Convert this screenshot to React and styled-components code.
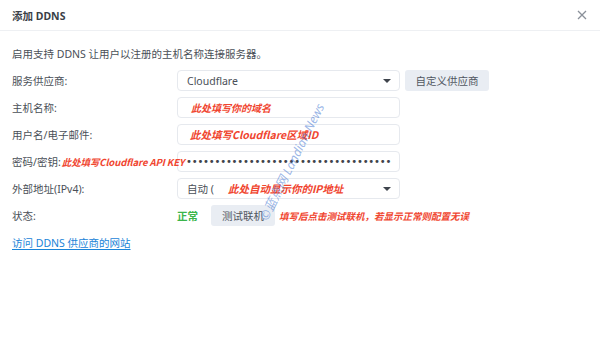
import React from 'react';
import styled, { createGlobalStyle } from 'styled-components';

const GlobalStyle = createGlobalStyle`
  html, body {
    margin: 0;
    padding: 0;
    background: #ffffff;
  }
  body {
    font-family: "Noto Sans", "Noto Sans CJK SC", sans-serif;
  }
`;

const Dialog = styled.div`
  position: relative;
  width: 600px;
  height: 338px;
  background: #ffffff;
  overflow: hidden;
`;

const Header = styled.div`
  display: flex;
  align-items: center;
  justify-content: space-between;
  height: 30px;
  padding: 0 12px;
  border-bottom: 1px solid #eef0f3;

  h1 {
    margin: 0;
    font-size: 10.5px;
    font-weight: 700;
    color: #3a3f47;
  }
`;

const Close = styled.button`
  display: flex;
  align-items: center;
  justify-content: center;
  width: 14px;
  height: 14px;
  padding: 0;
  border: none;
  background: none;
  margin-right: -1px;
`;

const Body = styled.div`
  padding: 16px 12px 0;
`;

const Desc = styled.p`
  margin: 0 0 9px;
  font-size: 10.5px;
  line-height: 14px;
  color: #4a4f57;
`;

const Form = styled.div`
  display: grid;
  grid-template-columns: 165px 1fr;
  grid-auto-rows: 21px;
  row-gap: 6px;
  align-items: center;
`;

const Label = styled.div`
  display: flex;
  align-items: center;
  white-space: nowrap;
  font-size: 10.5px;
  color: #4a4f57;
  overflow: visible;
  position: relative;
  z-index: 1;
`;

const Field = styled.div`
  display: flex;
  align-items: center;
  gap: 5px;
  height: 21px;
`;

const Box = styled.div`
  display: flex;
  align-items: center;
  justify-content: space-between;
  box-sizing: border-box;
  width: 223px;
  height: 21px;
  padding: 0 9px;
  border: 1px solid #e6e9ee;
  border-radius: 4px;
  background: transparent;
  font-size: 10.5px;
  color: #4a4f57;
  white-space: nowrap;
  overflow: hidden;
`;

const Caret = styled.span`
  width: 0;
  height: 0;
  border-left: 4px solid transparent;
  border-right: 4px solid transparent;
  border-top: 4px solid #3f444c;
  margin-right: -1px;
`;

const Note = styled.span`
  font-family: "Noto Sans CJK SC", "Noto Sans", sans-serif;
  font-size: ${(p) => p.$size || 10.5}px;
  font-weight: 700;
  font-style: italic;
  color: #f0452f;
  white-space: nowrap;
  margin-left: ${(p) => p.$ml || 0}px;
  letter-spacing: ${(p) => p.$ls || 0}px;
`;

const Dots = styled.span`
  font-family: "DejaVu Sans", sans-serif;
  font-size: 10px;
  letter-spacing: -0.2px;
  color: #3f444c;
  margin-left: -1px;
`;

const GreyButton = styled.button`
  display: flex;
  align-items: center;
  justify-content: center;
  box-sizing: border-box;
  width: ${(p) => p.$w}px;
  height: 21px;
  border: none;
  border-radius: 3px;
  background: #e9edf3;
  font-family: "Noto Sans", "Noto Sans CJK SC", sans-serif;
  font-size: 10.5px;
  color: #505660;
  padding: 0;
`;

const Ok = styled.span`
  font-size: 10.5px;
  font-weight: 700;
  color: #3bb54a;
  width: 29px;
`;

const Link = styled.a`
  display: inline-block;
  margin-top: 9px;
  font-size: 10.5px;
  color: #1a84d8;
  text-decoration: underline;
  text-underline-offset: 2px;
`;

const Watermark = styled.div`
  position: absolute;
  left: 223px;
  top: 146px;
  width: 142px;
  transform: rotate(-63.5deg);
  transform-origin: center;
  font-family: "Noto Sans", "Noto Sans CJK SC", sans-serif;
  font-size: 12.5px;
  font-style: italic;
  white-space: nowrap;
  color: rgba(70, 120, 210, 0.55);
  pointer-events: none;
`;

const App = () => {
  return (
    <>
      <GlobalStyle />
      <Dialog>
        <Header>
          <h1>添加 DDNS</h1>
          <Close aria-label="close">
            <svg width="10" height="10" viewBox="0 0 10 10">
              <path d="M1 1 L9 9 M9 1 L1 9" stroke="#8a9099" strokeWidth="1.3" />
            </svg>
          </Close>
        </Header>
        <Body>
          <Desc>启用支持 DDNS 让用户以注册的主机名称连接服务器。</Desc>
          <Form>
            <Label>服务供应商:</Label>
            <Field>
              <Box>
                <span>Cloudflare</span>
                <Caret />
              </Box>
              <GreyButton $w={84}>自定义供应商</GreyButton>
            </Field>

            <Label>主机名称:</Label>
            <Field>
              <Box>
                <Note $ml={4} $size={10}>此处填写你的域名</Note>
              </Box>
            </Field>

            <Label>用户名/电子邮件:</Label>
            <Field>
              <Box>
                <Note $ml={3}>此处填写Cloudflare区域ID</Note>
              </Box>
            </Field>

            <Label>
              密码/密钥:
              <Note $ml={1} $size={9.5} $ls={-0.1}>此处填写Cloudflare API KEY</Note>
            </Label>
            <Field>
              <Box>
                <Dots>{'•'.repeat(36)}</Dots>
              </Box>
            </Field>

            <Label>外部地址(IPv4):</Label>
            <Field>
              <Box>
                <span>
                  自动 (
                  <Note $ml={14}>此处自动显示你的IP地址</Note>
                </span>
                <Caret />
              </Box>
            </Field>

            <Label>状态:</Label>
            <Field>
              <Ok>正常</Ok>
              <GreyButton $w={64}>测试联机</GreyButton>
              <Note $size={9.5} $ml={-1}>填写后点击测试联机，若显示正常则配置无误</Note>
            </Field>
          </Form>
          <Link href="#">访问 DDNS 供应商的网站</Link>
        </Body>
        <Watermark>©蓝点网 Landian.News</Watermark>
      </Dialog>
    </>
  );
};

export default App;
